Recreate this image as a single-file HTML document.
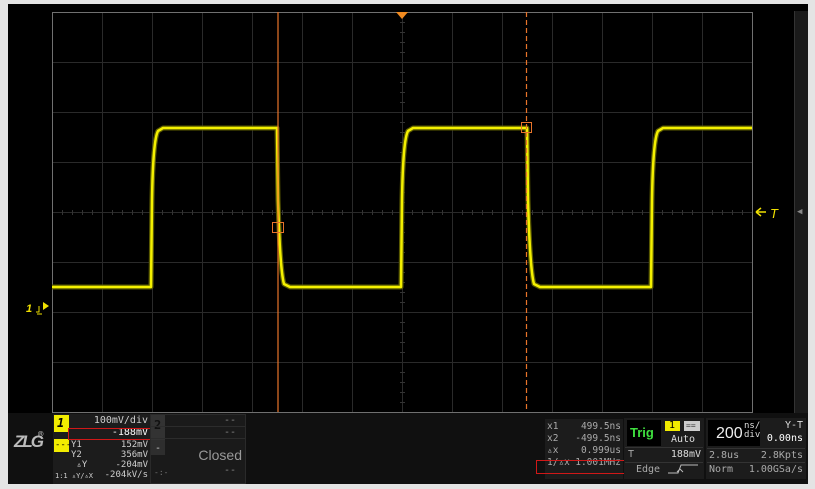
<!DOCTYPE html>
<html><head><style>
*{margin:0;padding:0;box-sizing:border-box}
body{width:815px;height:489px;background:#e4e4e4;position:relative;overflow:hidden;font-family:"DejaVu Sans Mono","Liberation Mono",monospace;color:#cfcfcf}
.a{position:absolute}
.t{position:absolute;font-size:10px;line-height:11px;white-space:nowrap}
.r{text-align:right}
</style></head><body>
<div class="a" style="left:8px;top:4px;width:800px;height:480px;background:#000"></div>
<div class="a" style="left:794px;top:11px;width:14px;height:402px;background:#1a1a1a;border-left:1px solid #333"></div>
<div class="t" style="left:797px;top:207px;color:#888;font-size:9px">◀</div>
<svg class="a" style="left:0;top:0" width="815" height="489">
<g stroke="#2a2a2a" stroke-width="1">
<path d="M102.5 12V412M152.5 12V412M202.5 12V412M252.5 12V412M302.5 12V412M352.5 12V412M402.5 12V412M452.5 12V412M502.5 12V412M552.5 12V412M602.5 12V412M652.5 12V412M702.5 12V412"/>
<path d="M52 62.5H752M52 112.5H752M52 162.5H752M52 212.5H752M52 262.5H752M52 312.5H752M52 362.5H752"/>
</g>
<rect x="52.5" y="12.5" width="700" height="400" fill="none" stroke="#707070"/>
<g stroke="#333">
<path d="M400 22.5h5M400 32.5h5M400 42.5h5M400 52.5h5M400 72.5h5M400 82.5h5M400 92.5h5M400 102.5h5M400 122.5h5M400 132.5h5M400 142.5h5M400 152.5h5M400 172.5h5M400 182.5h5M400 192.5h5M400 202.5h5M400 222.5h5M400 232.5h5M400 242.5h5M400 252.5h5M400 272.5h5M400 282.5h5M400 292.5h5M400 302.5h5M400 322.5h5M400 332.5h5M400 342.5h5M400 352.5h5M400 372.5h5M400 382.5h5M400 392.5h5M400 402.5h5"/>
<path d="M62.5 210v5M72.5 210v5M82.5 210v5M92.5 210v5M112.5 210v5M122.5 210v5M132.5 210v5M142.5 210v5M162.5 210v5M172.5 210v5M182.5 210v5M192.5 210v5M212.5 210v5M222.5 210v5M232.5 210v5M242.5 210v5M262.5 210v5M272.5 210v5M282.5 210v5M292.5 210v5M312.5 210v5M322.5 210v5M332.5 210v5M342.5 210v5M362.5 210v5M372.5 210v5M382.5 210v5M392.5 210v5M412.5 210v5M422.5 210v5M432.5 210v5M442.5 210v5M462.5 210v5M472.5 210v5M482.5 210v5M492.5 210v5M512.5 210v5M522.5 210v5M532.5 210v5M542.5 210v5M562.5 210v5M572.5 210v5M582.5 210v5M592.5 210v5M612.5 210v5M622.5 210v5M632.5 210v5M642.5 210v5M662.5 210v5M672.5 210v5M682.5 210v5M692.5 210v5M712.5 210v5M722.5 210v5M732.5 210v5M742.5 210v5"/>
</g>
<g fill="none" stroke-linejoin="round">
<path d="M52 287H151L152 200Q153 140 158 131L163 128H277L278 200Q280 270 284 284L290 287H401L402 200Q403 140 408 131L413 128H527L528 200Q530 270 534 284L540 287H651L652 200Q653 140 658 131L663 128H752" stroke="#5a5a00" stroke-width="5"/>
<path d="M52 287H151L152 200Q153 140 158 131L163 128H277L278 200Q280 270 284 284L290 287H401L402 200Q403 140 408 131L413 128H527L528 200Q530 270 534 284L540 287H651L652 200Q653 140 658 131L663 128H752" stroke="#f4f000" stroke-width="2.5"/>
</g>
<path d="M278 12V412" stroke="#e8742a" stroke-width="1.2"/>
<path d="M526.5 12V412" stroke="#e8742a" stroke-width="1.2" stroke-dasharray="5 3"/>
<rect x="272.5" y="222.5" width="11" height="10" fill="none" stroke="#e8742a"/>
<rect x="521.5" y="122.5" width="10" height="10" fill="none" stroke="#e8742a"/>
<path d="M396 12H408L402 19Z" fill="#f08a20"/>
<path d="M756 212H766M756 212L761 208M756 212L761 216" stroke="#f0e000" stroke-width="1.5"/>
<text x="770" y="218" font-family="Liberation Sans" font-style="italic" font-size="13" fill="#f0e000">T</text>
<text x="26" y="312" font-family="Liberation Sans" font-style="italic" font-size="11" fill="#f0e000" font-weight="bold">1</text>
<path d="M36 312H39V306M37 314h5" stroke="#f0e000" fill="none"/>
<path d="M43 302L49 306L43 310Z" fill="#f0e000"/>
</svg>
<div class="a" style="left:8px;top:413px;width:800px;height:71px;background:#101010"></div>
<div class="t" style="left:14px;top:436px;font-family:'Liberation Sans';font-style:italic;font-weight:bold;font-size:17px;color:#bbb;letter-spacing:-2px">ZLG</div>
<div class="t" style="left:38px;top:430px;font-size:9px;color:#bbb">®</div>
<div class="a" style="left:53px;top:414px;width:97px;height:70px;background:#1c1c1c"></div>
<div class="a" style="left:54px;top:415px;width:15px;height:17px;background:#f2ec00"></div>
<div class="t" style="left:57px;top:418px;color:#000;font-weight:bold;font-style:italic;font-size:12px">1</div>
<div class="a" style="left:54px;top:439px;width:15px;height:13px;background:#f2ec00"></div>
<div class="t" style="left:55px;top:440px;color:#000;font-size:9px">---</div>
<div class="t r" style="left:70px;top:415px;width:78px">100mV/div</div>
<div class="t r" style="left:70px;top:427px;width:78px;color:#fff">-188mV</div>
<div class="a" style="left:68px;top:428px;width:107px;height:12px;border:1px solid #d01818"></div>
<div class="t" style="left:71px;top:440px;line-height:10px;font-size:9px">Y1<br>Y2<br>&nbsp;▵Y<br></div>
<div class="t r" style="left:90px;top:440px;width:58px;line-height:10px;font-size:9px">152mV<br>356mV<br>-204mV<br>-204kV/s</div>
<div class="t" style="left:55px;top:471px;font-size:7px">1:1 ▵Y/▵X</div>
<div class="a" style="left:150px;top:414px;width:96px;height:70px;background:#1a1a1a;border:1px solid #2a2a2a"></div>
<div class="a" style="left:151px;top:415px;width:14px;height:34px;background:#333"></div>
<div class="t" style="left:154px;top:420px;color:#111;font-weight:bold;font-size:12px">2</div>
<div class="a" style="left:151px;top:440px;width:14px;height:15px;background:#2e2e2e"></div>
<div class="t" style="left:155px;top:443px;color:#ccc">-</div>
<div class="t r" style="left:170px;top:415px;width:66px;color:#888">--</div>
<div class="t r" style="left:170px;top:427px;width:66px;color:#888">--</div>
<div class="a" style="left:151px;top:426px;width:94px;height:1px;background:#2c2c2c"></div>
<div class="a" style="left:151px;top:438px;width:94px;height:1px;background:#2c2c2c"></div>
<div class="t r" style="left:170px;top:447px;width:72px;font-family:'Liberation Sans';font-size:14px;line-height:16px;color:#999">Closed</div>
<div class="t" style="left:154px;top:467px;color:#777;font-size:8px">-:-</div>
<div class="t r" style="left:170px;top:465px;width:66px;color:#888">--</div>
<div class="a" style="left:545px;top:419px;width:78px;height:60px;background:#1c1c1c"></div>
<div class="t" style="left:547px;top:421px;line-height:12px;color:#aaa;font-size:9.5px">x1<br>x2<br>▵x<br>1/▵x</div>
<div class="t r" style="left:560px;top:421px;width:61px;line-height:12px;color:#aaa;font-size:9.5px">499.5ns<br>-499.5ns<br>0.999us<br>1.001MHz</div>
<div class="a" style="left:536px;top:460px;width:89px;height:14px;border:1px solid #d01818"></div>
<div class="a" style="left:624px;top:418px;width:80px;height:61px;background:#1c1c1c"></div>
<div class="a" style="left:627px;top:420px;width:34px;height:26px;background:#000"></div>
<div class="t" style="left:630px;top:426px;font-family:'Liberation Sans';font-weight:bold;font-size:13px;line-height:14px;color:#3fe03f">Trig</div>
<div class="a" style="left:665px;top:421px;width:15px;height:10px;background:#f2ec00"></div>
<div class="t" style="left:669px;top:420px;color:#000">1</div>
<div class="a" style="left:684px;top:421px;width:16px;height:10px;background:#ccc"></div>
<div class="t" style="left:686px;top:420px;color:#333;font-size:8px">==</div>
<div class="t" style="left:671px;top:434px;color:#ddd">Auto</div>
<div class="a" style="left:625px;top:447px;width:78px;height:1px;background:#333"></div>
<div class="t" style="left:628px;top:449px;color:#aaa">T</div>
<div class="t r" style="left:640px;top:449px;width:61px;color:#ddd">188mV</div>
<div class="a" style="left:625px;top:462px;width:78px;height:1px;background:#333"></div>
<div class="t" style="left:636px;top:464px;color:#aaa">Edge</div>
<svg class="a" style="left:668px;top:463px" width="32" height="12"><path d="M0 10H10L13 2H30M9 9L12 6L15 9" stroke="#bbb" fill="none"/></svg>
<div class="a" style="left:706px;top:418px;width:100px;height:61px;background:#1c1c1c"></div>
<div class="a" style="left:708px;top:420px;width:52px;height:26px;background:#000"></div>
<div class="t" style="left:716px;top:425px;font-family:'Liberation Sans';font-size:16px;line-height:17px;color:#eee">200</div>
<div class="t" style="left:744px;top:422px;font-size:9px;line-height:9px;color:#ddd">ns/<br>div</div>
<div class="t r" style="left:760px;top:420px;width:43px;color:#ddd">Y-T</div>
<div class="t r" style="left:760px;top:433px;width:43px;color:#fff">0.00ns</div>
<div class="a" style="left:707px;top:448px;width:98px;height:1px;background:#333"></div>
<div class="t" style="left:709px;top:450px;color:#aaa">2.8us</div>
<div class="t r" style="left:750px;top:450px;width:53px;color:#aaa">2.8Kpts</div>
<div class="a" style="left:707px;top:462px;width:98px;height:1px;background:#333"></div>
<div class="t" style="left:709px;top:464px;color:#aaa">Norm</div>
<div class="t r" style="left:740px;top:464px;width:63px;color:#aaa">1.00GSa/s</div>
</body></html>
